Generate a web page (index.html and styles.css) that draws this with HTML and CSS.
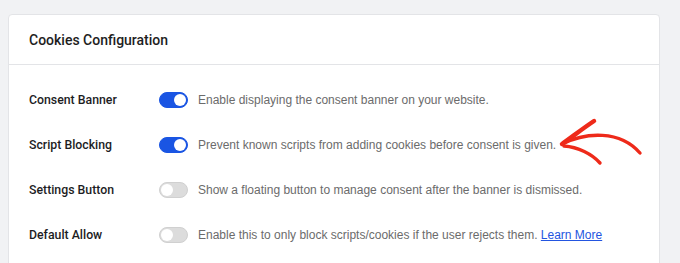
FILE: index.html
```html
<!DOCTYPE html>
<html lang="en">
<head>
    <meta charset="UTF-8">
    <meta name="viewport" content="width=device-width, initial-scale=1.0">
    <title>Cookies Configuration</title>
    <link rel="stylesheet" href="styles.css">
</head>
<body>
    <div class="card">
        <div class="card-header">
            <h2>Cookies Configuration</h2>
        </div>
        <div class="card-body">
            <div class="setting-row">
                <span class="setting-label">Consent Banner</span>
                <span class="toggle on"></span>
                <span class="setting-desc">Enable displaying the consent banner on your website.</span>
            </div>
            <div class="setting-row">
                <span class="setting-label">Script Blocking</span>
                <span class="toggle on"></span>
                <span class="setting-desc">Prevent known scripts from adding cookies before consent is given.</span>
                <svg class="arrow" width="90" height="52" viewBox="0 0 90 52">
                    <path d="M6 27 C 16 20, 26 12, 38 4" fill="none" stroke="#ee2a1a" stroke-width="4.5" stroke-linecap="round"/>
                    <path d="M6 27 C 30 15, 64 13, 84 36" fill="none" stroke="#ee2a1a" stroke-width="3.4" stroke-linecap="round"/>
                    <path d="M8 29 C 22 30, 36 37, 44 46" fill="none" stroke="#ee2a1a" stroke-width="3.4" stroke-linecap="round"/>
                </svg>
            </div>
            <div class="setting-row">
                <span class="setting-label">Settings Button</span>
                <span class="toggle"></span>
                <span class="setting-desc">Show a floating button to manage consent after the banner is dismissed.</span>
            </div>
            <div class="setting-row">
                <span class="setting-label">Default Allow</span>
                <span class="toggle"></span>
                <span class="setting-desc">Enable this to only block scripts/cookies if the user rejects them. <a href="#">Learn More</a></span>
            </div>
        </div>
    </div>
</body>
</html>
```

FILE: styles.css
```css
body {
    margin: 0;
    padding: 14px 20px 0 8px;
    background-color: #f1f2f4;
    font-family: "Liberation Sans", Arial, sans-serif;
    height: 263px;
    box-sizing: border-box;
    overflow: hidden;
}

.card {
    background: #fff;
    border: 1px solid #e3e4e7;
    border-radius: 4px;
    height: 300px;
}

.card-header {
    height: 49px;
    display: flex;
    align-items: center;
    padding: 0 20px;
    border-bottom: 1px solid #e3e4e7;
}

.card-header h2 {
    margin: 0;
    font-family: "Roboto", sans-serif;
    font-size: 14px;
    font-weight: 500;
    color: #1e1e1e;
}

.card-body {
    padding: 12px 20px 0 20px;
}

.setting-row {
    position: relative;
    display: flex;
    align-items: center;
    height: 45px;
    white-space: nowrap;
}

.setting-label {
    width: 130px;
    font-family: "Roboto", sans-serif;
    font-size: 12.3px;
    font-weight: 500;
    color: #1d1d1f;
}

.setting-desc {
    margin-left: 10px;
    font-size: 12px;
    color: #6b6b6b;
}

.setting-desc a {
    color: #2355e0;
}

.toggle {
    position: relative;
    flex: none;
    width: 29px;
    height: 16px;
    border-radius: 8px;
    background: #dcdcdc;
    box-sizing: border-box;
    border: 1px solid #d0d0d0;
}

.toggle::after {
    content: "";
    position: absolute;
    top: 1px;
    left: 1px;
    width: 12px;
    height: 12px;
    border-radius: 50%;
    background: #fff;
}

.toggle.on {
    background: #1a55e3;
    border-color: #1a55e3;
}

.toggle.on::after {
    left: 14px;
}

.arrow {
    position: absolute;
    left: 527px;
    top: -5px;
}
```
